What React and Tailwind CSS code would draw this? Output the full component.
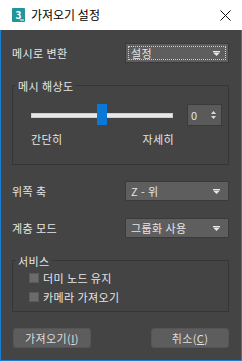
import React from 'react';

const font = { fontFamily: '"Noto Sans CJK KR", "Noto Sans", sans-serif' };

const Arrow = () => (
  <svg width="7" height="5" viewBox="0 0 7 5" className="shrink-0">
    <rect x="0" y="0" width="7" height="1" fill="#e8e8e8" />
    <polygon points="0,1.5 7,1.5 3.5,5" fill="#e8e8e8" />
  </svg>
);

const Select = ({ value, focused }) => (
  <div className="relative flex h-[20px] w-[104px] items-center justify-between border border-[#3a3a3a] bg-[#5e5e5e] pl-[5px] pr-[8px]">
    {focused && (
      <div className="pointer-events-none absolute inset-[2px] border border-dotted border-[#d0d0d0]" />
    )}
    <span className="text-[11px] leading-none text-[#e6e6e6]">{value}</span>
    <Arrow />
  </div>
);

const Row = ({ label, children }) => (
  <div className="flex h-[20px] items-center justify-between">
    <span className="text-[11px] leading-none text-[#e6e6e6]">{label}</span>
    {children}
  </div>
);

const Group = ({ title, className, children }) => (
  <div className={`relative border border-[#363636] ${className}`}>
    <span className="absolute left-[3px] top-[-7px] bg-[#444444] px-[2px] text-[11px] leading-[14px] text-[#e6e6e6]">
      {title}
    </span>
    {children}
  </div>
);

const Check = ({ label }) => (
  <div className="flex h-[10px] items-center gap-[4px]">
    <div className="h-[10px] w-[10px] border border-[#5a5a5a] bg-[#6b6b6b]" />
    <span className="text-[11px] leading-none text-[#e6e6e6]">{label}</span>
  </div>
);

const Button = ({ text, mnemonic }) => (
  <div className="flex h-[20px] w-[78px] items-center justify-center rounded-[3px] border border-[#555555] bg-[#5d5d5d] text-[11px] leading-none text-[#dedede]">
    {text}(<span className="underline underline-offset-1">{mnemonic}</span>)
  </div>
);

export default function App() {
  return (
    <div className="flex h-[361px] w-[242px] flex-col bg-white" style={font}>
      {/* title bar */}
      <div className="flex h-[30px] shrink-0 items-center bg-white pl-[12px] pr-[11px]">
        <div className="relative flex h-[14px] w-[13px] items-center justify-center rounded-[1px] bg-[#21959a]">
          <span className="text-[10px] font-bold leading-none text-white">3</span>
          <div className="absolute bottom-[1px] right-[1px] h-[2px] w-[4px] bg-[#7fd3d4]" />
        </div>
        <span className="ml-[6px] text-[12px] leading-none text-black">가져오기 설정</span>
        <svg width="11" height="11" viewBox="0 0 11 11" className="ml-auto">
          <path d="M0.5 0.5 L10.5 10.5 M10.5 0.5 L0.5 10.5" stroke="#111" strokeWidth="1" />
        </svg>
      </div>

      {/* body */}
      <div className="flex flex-1 flex-col border-x border-b border-[#1a7fd4] bg-[#444444] pl-[11px] pr-[12px] tracking-[0.4px]">
        <div className="mt-[13px]">
          <Row label="메시로 변환">
            <Select value="설정" focused />
          </Row>
        </div>

        <Group title="메시 해상도" className="mt-[22px] h-[80px]">
          <div className="mt-[18px] flex h-[22px] items-center pl-[18px]">
            <div className="relative flex h-[22px] w-[142px] items-center">
              <div className="h-[5px] w-full border border-[#cfcfcf] bg-[#e8e8e8]" />
              <div className="absolute left-[66px] top-[0px] h-[21px] w-[10px] bg-[#0a78d7]" />
            </div>
            <div className="ml-[14px] flex h-[22px] w-[35px] items-center justify-between border border-[#3a3a3a] bg-[#5a5a5a] pl-[3px] pr-[5px]">
              <span className="text-[11px] leading-none text-[#e6e6e6]">0</span>
              <svg width="5" height="8" viewBox="0 0 5 8">
                <polygon points="2.5,0 5,3 0,3" fill="#dcdcdc" />
                <polygon points="0,5 5,5 2.5,8" fill="#dcdcdc" />
              </svg>
            </div>
          </div>
          <div className="mt-[8px] flex w-[161px] justify-between pl-[18px] text-[11px] leading-none text-[#e6e6e6]">
            <span>간단히</span>
            <span>자세히</span>
          </div>
        </Group>

        <div className="mt-[16px]">
          <Row label="위쪽 축">
            <Select value="Z - 위" />
          </Row>
        </div>
        <div className="mt-[17px]">
          <Row label="계층 모드">
            <Select value="그룹화 사용" />
          </Row>
        </div>

        <Group title="서비스" className="mt-[22px] h-[52px]">
          <div className="flex flex-col gap-[9px] pl-[16px] pt-[12px]">
            <Check label="더미 노드 유지" />
            <Check label="카메라 가져오기" />
          </div>
        </Group>

        <div className="mt-[16px] flex justify-between pl-[1px]">
          <Button text="가져오기" mnemonic="I" />
          <Button text="취소" mnemonic="C" />
        </div>
      </div>
    </div>
  );
}
